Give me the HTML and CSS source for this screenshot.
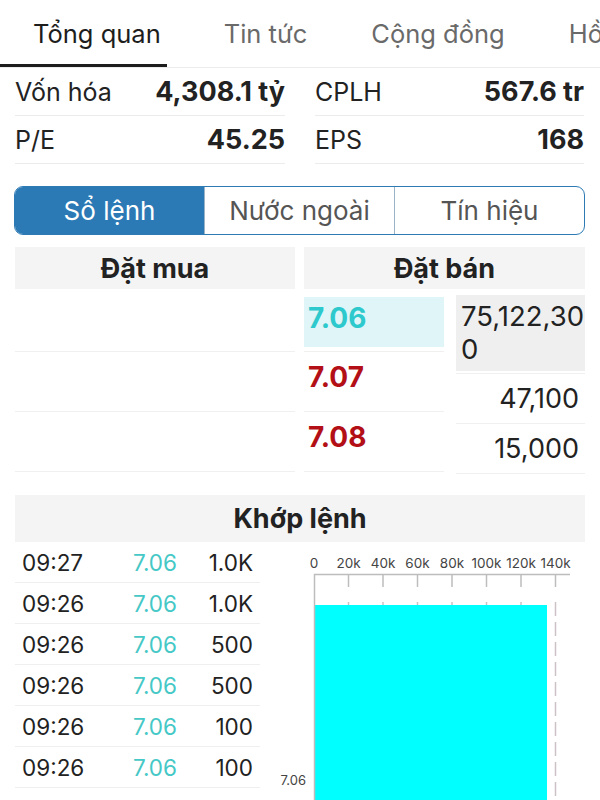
FILE: index.html
```html
<!DOCTYPE html>
<html lang="vi">
<head>
<meta charset="utf-8">
<title>Tổng quan</title>
<link rel="stylesheet" href="styles.css">
</head>
<body>
<div class="page">
  <nav class="tabs">
    <div class="tab active">Tổng quan</div>
    <div class="tab">Tin tức</div>
    <div class="tab">Cộng đồng</div>
    <div class="tab">Hồ sơ</div>
  </nav>

  <section class="stats">
    <div class="stat"><span class="label">Vốn hóa</span><span class="value">4,308.1 tỷ</span></div>
    <div class="stat"><span class="label">CPLH</span><span class="value">567.6 tr</span></div>
    <div class="stat"><span class="label">P/E</span><span class="value">45.25</span></div>
    <div class="stat"><span class="label">EPS</span><span class="value">168</span></div>
  </section>

  <div class="segmented">
    <div class="seg active">Sổ lệnh</div>
    <div class="seg">Nước ngoài</div>
    <div class="seg">Tín hiệu</div>
  </div>

  <section class="book">
    <div class="book-head">Đặt mua</div>
    <div class="book-head">Đặt bán</div>
    <div class="buy-col">
      <div class="buy-row first"></div>
      <div class="buy-row"></div>
      <div class="buy-row"></div>
    </div>
    <div class="sell-col">
      <div class="price-col">
        <div class="pcell first"><div class="pbox ref">7.06</div></div>
        <div class="pcell"><div class="pbox up">7.07</div></div>
        <div class="pcell"><div class="pbox up">7.08</div></div>
      </div>
      <div class="qty-col">
        <div class="qcell first"><div class="qbox">75,122,300</div></div>
        <div class="qcell">47,100</div>
        <div class="qcell">15,000</div>
      </div>
    </div>
  </section>

  <section class="match">
    <div class="match-head">Khớp lệnh</div>
    <div class="match-body">
      <div class="trades">
        <div class="trade"><span class="t">09:27</span><span class="p">7.06</span><span class="v">1.0K</span></div>
        <div class="trade"><span class="t">09:26</span><span class="p">7.06</span><span class="v">1.0K</span></div>
        <div class="trade"><span class="t">09:26</span><span class="p">7.06</span><span class="v">500</span></div>
        <div class="trade"><span class="t">09:26</span><span class="p">7.06</span><span class="v">500</span></div>
        <div class="trade"><span class="t">09:26</span><span class="p">7.06</span><span class="v">100</span></div>
        <div class="trade"><span class="t">09:26</span><span class="p">7.06</span><span class="v">100</span></div>
        <div class="trade"><span class="t">09:25</span><span class="p">7.06</span><span class="v">100</span></div>
      </div>
      <div class="chart">
        <svg width="338" height="270" viewBox="0 0 338 270">
          <g class="axis-labels" font-size="13.5" fill="#444" text-anchor="middle">
            <text x="52" y="26">0</text>
            <text x="86.5" y="26">20k</text>
            <text x="121" y="26">40k</text>
            <text x="155.5" y="26">60k</text>
            <text x="190" y="26">80k</text>
            <text x="224.5" y="26">100k</text>
            <text x="259" y="26">120k</text>
            <text x="293.5" y="26">140k</text>
          </g>
          <line x1="52" y1="32.5" x2="308" y2="32.5" stroke="#bdbdbd" stroke-width="1.5"/>
          <g stroke="#bdbdbd" stroke-width="1.5">
            <line x1="86.5" y1="32" x2="86.5" y2="45"/>
            <line x1="121" y1="32" x2="121" y2="45"/>
            <line x1="155.5" y1="32" x2="155.5" y2="45"/>
            <line x1="190" y1="32" x2="190" y2="45"/>
            <line x1="224.5" y1="32" x2="224.5" y2="45"/>
            <line x1="259" y1="32" x2="259" y2="45"/>
            <line x1="293.5" y1="32" x2="293.5" y2="45"/>
          </g>
          <g stroke="#cbc1c6" stroke-width="1.5" stroke-dasharray="14 6">
            <line x1="86.5" y1="60" x2="86.5" y2="270"/>
            <line x1="121" y1="60" x2="121" y2="270"/>
            <line x1="155.5" y1="60" x2="155.5" y2="270"/>
            <line x1="190" y1="60" x2="190" y2="270"/>
            <line x1="224.5" y1="60" x2="224.5" y2="270"/>
            <line x1="259" y1="60" x2="259" y2="270"/>
            <line x1="293.5" y1="60" x2="293.5" y2="270"/>
          </g>
          <rect x="53" y="63" width="232" height="210" fill="#00ffff"/>
          <line x1="52.5" y1="32" x2="52.5" y2="270" stroke="#bdbdbd" stroke-width="1.5"/>
          <text x="44" y="243" font-size="13" fill="#444" text-anchor="end">7.06</text>
        </svg>
      </div>
    </div>
  </section>
</div>
</body>
</html>
```

FILE: styles.css
```css
* { box-sizing: border-box; }
html, body { margin: 0; padding: 0; background: #fff; }
body {
  font-family: Inter, "Liberation Sans", "Noto Sans", sans-serif;
  color: #222;
  width: 600px;
  height: 800px;
  overflow: hidden;
}

.tabs {
  display: flex;
  height: 68px;
  border-bottom: 1px solid #ececec;
  white-space: nowrap;
  overflow: hidden;
  font-size: 25.5px;
  color: #6a6a6a;
}
.tab {
  padding: 18px 0 0 0;
  margin-right: 64px;
  flex: none;
}
.tab.active {
  color: #1d1d1d;
  padding-left: 33px;
  padding-right: 6px;
  margin-right: 57px;
  border-bottom: 3px solid #1d1d1d;
}

.stats {
  display: grid;
  grid-template-columns: 270px 269px;
  column-gap: 30px;
  padding: 0 15px;
  font-size: 25px;
}
.stat {
  display: flex;
  justify-content: space-between;
  align-items: center;
  height: 48px;
  border-bottom: 1px solid #ebebeb;
}
.stat .value { font-weight: 700; font-size: 27px; }

.segmented {
  display: flex;
  margin: 22px 15px 0 14px;
  height: 49px;
  border: 1.5px solid #2d7ab5;
  border-radius: 9px;
  overflow: hidden;
  font-size: 26px;
  color: #555;
}
.seg {
  flex: 1 1 0;
  display: flex;
  align-items: center;
  justify-content: center;
  border-left: 1px solid #9bb3c7;
}
.seg:first-child { border-left: none; }
.seg.active { background: #2b7ab6; color: #fff; }

.book {
  display: grid;
  grid-template-columns: 280px 281px;
  column-gap: 9px;
  margin: 12px 15px 0;
}
.book-head {
  height: 42px;
  background: #f4f4f4;
  font-size: 27px;
  font-weight: 700;
  display: flex;
  align-items: center;
  justify-content: center;
}
.buy-row {
  height: 60px;
  border-bottom: 1px solid #f0f0f0;
}
.buy-row.first { height: 63px; }

.sell-col {
  display: grid;
  grid-template-columns: 140px 129px;
  column-gap: 12px;
}
.pcell {
  height: 60px;
  border-bottom: 1px solid #f0f0f0;
}
.pcell.first { height: 63px; padding-top: 8px; }
.pbox {
  height: 50px;
  padding: 0 4px;
  font-size: 28px;
  font-weight: 700;
  line-height: 42px;
}
.pcell:not(.first) .pbox { line-height: 30px; padding-top: 10px; }
.pbox.ref { background: #dff5f8; color: #2ec9cc; }
.pbox.up { color: #b30f16; }

.qcell {
  height: 50px;
  border-bottom: 1px solid #f0f0f0;
  display: flex;
  align-items: center;
  justify-content: flex-end;
  font-size: 27px;
  color: #222;
  padding-right: 6px;
}
.qcell.first {
  height: 85px;
  padding: 6px 0 3px;
  display: block;
}
.qbox {
  height: 76px;
  background: #efefef;
  padding: 5px 0 0 5px;
  line-height: 33px;
  font-size: 27.5px;
  word-break: break-all;
}

.match { margin: 21px 15px 0; }
.match-head {
  height: 47px;
  background: #f4f4f4;
  font-size: 27px;
  font-weight: 700;
  display: flex;
  align-items: center;
  justify-content: center;
}
.match-body {
  display: flex;
  margin-right: -15px;
}
.trades { width: 245px; flex: none; }
.trade {
  display: flex;
  align-items: center;
  height: 41px;
  border-bottom: 1px solid #efefef;
  font-size: 22.5px;
  padding: 0 7px;
}
.trade .t { width: 111px; }
.trade .p { width: 60px; color: #45c8c6; }
.trade .v { flex: 1; text-align: right; }
.chart { flex: none; margin-left: 2px; }
.chart svg { display: block; font-family: Inter, "Liberation Sans", sans-serif; }
```
